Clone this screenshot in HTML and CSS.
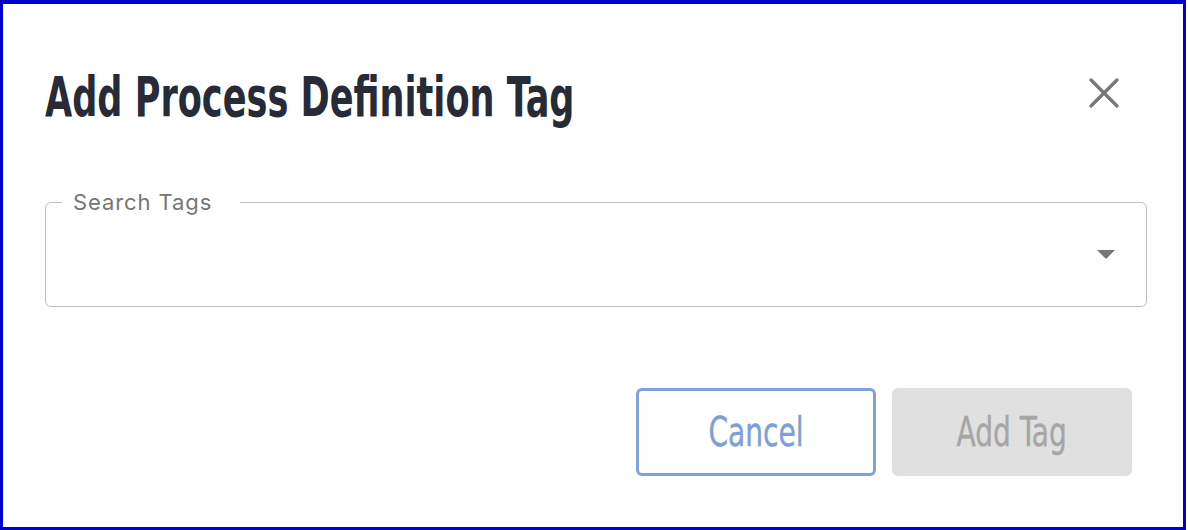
FILE: index.html
```html
<!DOCTYPE html>
<html lang="en">
<head>
<meta charset="utf-8">
<title>Add Process Definition Tag</title>
<link rel="stylesheet" href="styles.css">
</head>
<body>
<div class="frame">
  <div class="dialog">
    <header class="dialog-header">
      <h1 class="dialog-title"><span class="title-text">Add Process Definition Tag</span></h1>
      <button class="close-btn" type="button" aria-label="Close">
        <svg width="32" height="32" viewBox="0 0 32 32" aria-hidden="true">
          <path d="M3 3 L29 29 M29 3 L3 29" stroke="#767676" stroke-width="3.2" stroke-linecap="round" fill="none"/>
        </svg>
      </button>
    </header>
    <fieldset class="field">
      <legend class="field-label">Search Tags</legend>
      <div class="select">
        <svg class="select-arrow" width="18" height="9" viewBox="0 0 18 9" aria-hidden="true">
          <path d="M0 0 H18 L9 9 Z" fill="#767676"/>
        </svg>
      </div>
    </fieldset>
    <div class="actions">
      <button class="btn btn-outline" type="button"><span class="btn-text">Cancel</span></button>
      <button class="btn btn-disabled" type="button" disabled><span class="btn-text">Add Tag</span></button>
    </div>
  </div>
</div>
</body>
</html>
```

FILE: styles.css
```css
html, body {
  margin: 0;
  padding: 0;
  background: #ffffff;
}

.frame {
  box-sizing: border-box;
  width: 1186px;
  height: 530px;
  border: 3px solid #0000cc;
  border-top-width: 4px;
  background: #ffffff;
}

.dialog {
  padding: 0 36px 0 42px;
}

.dialog-header {
  display: flex;
  align-items: center;
  justify-content: space-between;
  margin-top: 61px;
  height: 64px;
}

.dialog-title {
  margin: 0;
  font-family: "DejaVu Sans Condensed", "Liberation Sans", sans-serif;
  font-weight: 700;
  font-size: 56px;
  line-height: 64px;
  color: #272a37;
  white-space: nowrap;
}

.title-text {
  display: inline-block;
  transform: scaleX(0.697);
  transform-origin: left center;
}

.close-btn {
  border: 0;
  background: none;
  padding: 0;
  width: 32px;
  height: 32px;
  margin-right: 27px;
  margin-bottom: 8px;
  cursor: pointer;
  display: flex;
}

.field {
  margin: 61px 0 0 0;
  padding: 0 16px 11px 16px;
  border: 1.5px solid #bfbfbf;
  border-radius: 6px;
  min-width: 0;
}

.field-label {
  padding: 0 28px 0 11px;
  font-family: Inter, "Noto Sans", sans-serif;
  font-size: 22px;
  letter-spacing: 0.9px;
  line-height: 24px;
  color: #767676;
}

.select {
  height: 81px;
  display: flex;
  align-items: center;
  justify-content: flex-end;
  padding-right: 15px;
}

.actions {
  display: flex;
  justify-content: flex-end;
  gap: 16px;
  margin-top: 81px;
  padding-right: 15px;
}

.btn {
  box-sizing: border-box;
  width: 240px;
  height: 88px;
  border-radius: 6px;
  font-family: "DejaVu Sans Condensed", "Liberation Sans", sans-serif;
  font-size: 40px;
  font-weight: 400;
  display: flex;
  align-items: center;
  justify-content: center;
  padding: 0;
}

.btn-text {
  display: inline-block;
  transform: scaleX(0.78);
  -webkit-text-stroke: 0.4px currentColor;
}

.btn-outline {
  background: #ffffff;
  border: 3px solid #7fa1dc;
  color: #7b9fd8;
  cursor: pointer;
}

.btn-disabled {
  background: #e0e0e0;
  border: 0;
  color: #a6a6a6;
}
```
